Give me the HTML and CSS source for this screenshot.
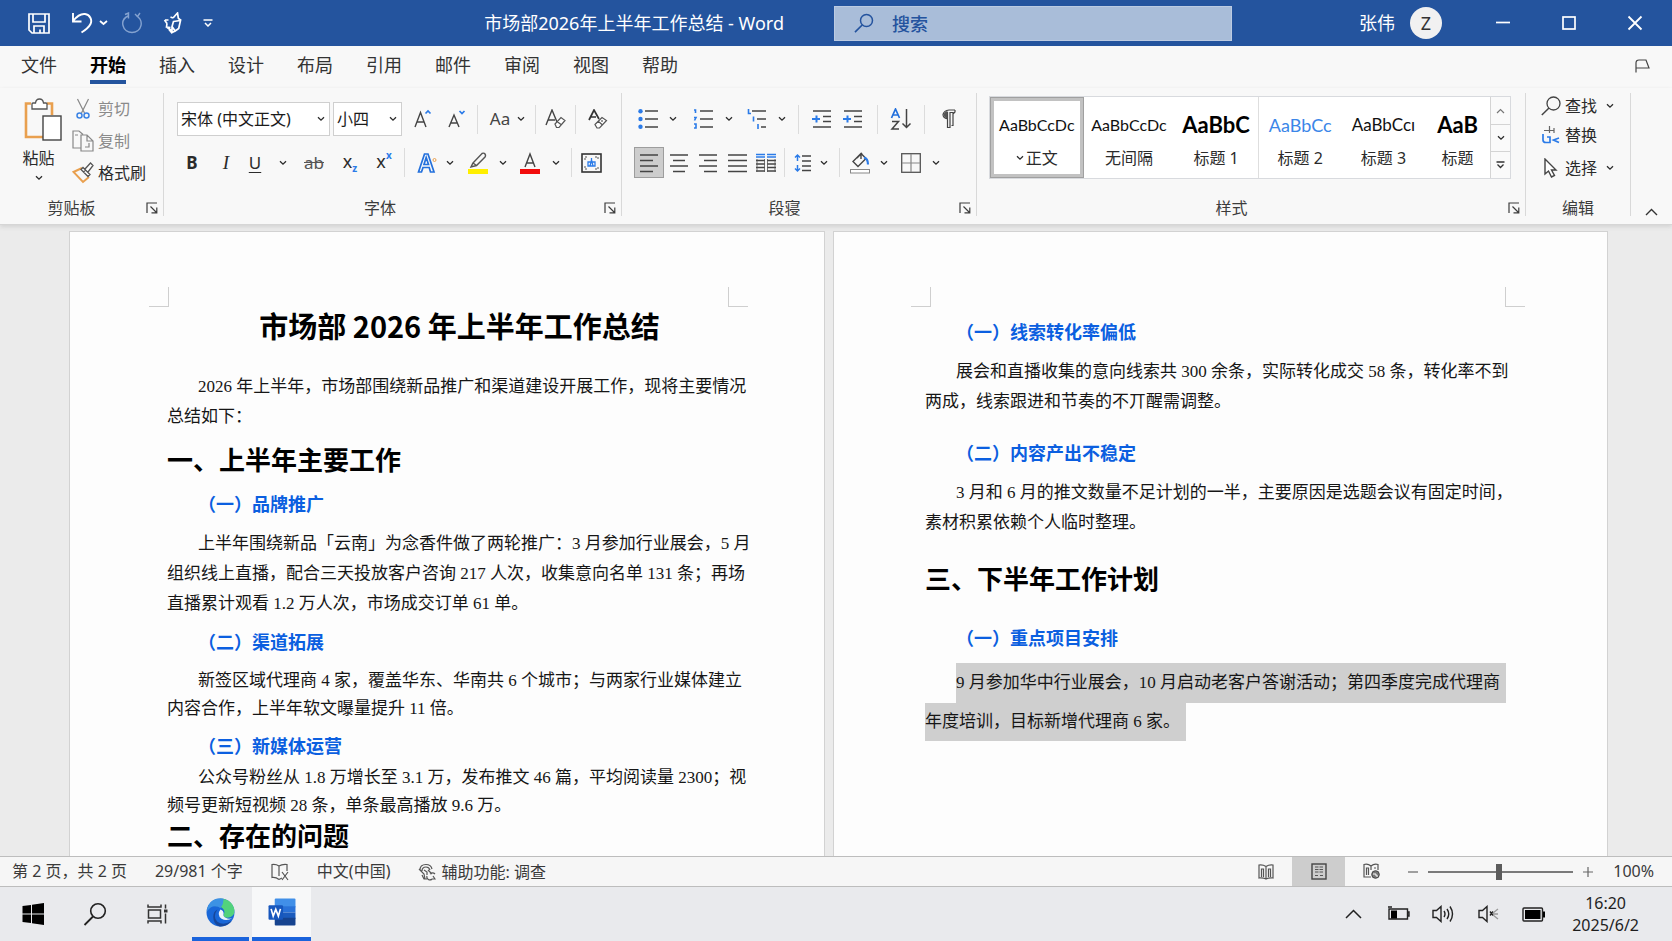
FILE: index.html
```html
<!DOCTYPE html>
<html lang="zh-CN">
<head>
<meta charset="utf-8">
<title>市场部2026年上半年工作总结 - Word</title>
<link rel="stylesheet" href="styles.css">
</head>
<body>
<svg class="defs" aria-hidden="true">
  <symbol id="chev" viewBox="0 0 8 6"><path d="M1 1.2 4 4.2 7 1.2" fill="none" stroke="currentColor" stroke-width="1.3"/></symbol>
  <symbol id="launch" viewBox="0 0 12 12"><path d="M1 11V1h10M4.5 4.5l6 6M10.8 5.5v5.3H5.5" fill="none" stroke="currentColor" stroke-width="1.2"/></symbol>
</svg>

<header class="titlebar">
  <div class="qat">
    <button class="ico" aria-label="保存"><svg width="24" height="24" viewBox="0 0 24 24"><path d="M2 3h20v19H5l-3-3zM6 3v8h12V3M7 22v-7h10v7M13 18.500v3" fill="none" stroke="#fff" stroke-width="1.7"/></svg></button>
    <button class="ico" aria-label="撤消"><svg width="22" height="24" viewBox="0 0 22 24"><path d="M2 2v8.500h8.500M2 10C6 5 10 2.500 14 3c5 .6 7.500 6 5.500 10-1.500 3-5 6-9 8.500" fill="none" stroke="#fff" stroke-width="1.9"/></svg></button>
    <button class="ico chevbtn" aria-label="撤消选项"><svg width="9" height="6" viewBox="0 0 9 6"><path d="M1 1l3.500 3L8 1" fill="none" stroke="#fff" stroke-width="1.8"/></svg></button>
    <button class="ico redo" aria-label="重复"><svg width="22" height="22" viewBox="0 0 22 22"><path d="M4 2.500 7.500 1v5.500M7 4C3 6 1 9.500 2 13.500 3 18 7 20.500 11 20.500s8-2.500 9-7c.8-4-1-7.500-4.500-9.500M14 2l5 5M19 1l-2.500 3.500" fill="none" stroke="#85a3d0" stroke-width="1.4"/></svg></button>
    <button class="ico" aria-label="触摸模式"><svg width="20" height="22" viewBox="0 0 20 22"><path d="M10 6 14.500 1l.8 5M10 6 7.500 5M2 8h3.500M1.500 8 4 11.500M4 11.500 3.500 15l4 .5M3.500 15l5 3.500M10.500 9.500 17.500 8.500l-1.800 8-3.500 2.500-3.200-4.500zM9 15v5.500l3.500-1.800M15 6l3 2.500M6 17.500l2.500 3" fill="none" stroke="#fff" stroke-width="1.7"/></svg></button>
    <button class="ico" aria-label="自定义快速访问工具栏"><svg width="10" height="8" viewBox="0 0 10 8"><path d="M.5 1h9M2 4l3 3 3-3" fill="none" stroke="#fff" stroke-width="1.5"/></svg></button>
  </div>
  <h1 class="wintitle">市场部2026年上半年工作总结 - Word</h1>
  <label class="search"><svg width="20" height="20" viewBox="0 0 20 20"><circle cx="12.500" cy="7.500" r="6" fill="none" stroke="#24539e" stroke-width="1.500"/><path d="M8.200 12 1 19.200" stroke="#24539e" stroke-width="1.700"/></svg><input type="text" placeholder="搜索" aria-label="搜索"></label>
  <div class="account">
    <span>张伟</span><span class="avatar">Z</span>
    <button class="win" aria-label="最小化"><svg width="16" height="16"><path d="M1 7.500h14" stroke="#fff" stroke-width="1.700"/></svg></button>
    <button class="win" aria-label="最大化"><svg width="16" height="16"><rect x="2" y="2" width="12" height="12" fill="none" stroke="#fff" stroke-width="1.700"/></svg></button>
    <button class="win" aria-label="关闭"><svg width="16" height="16"><path d="M1.500 1.500l13 13M14.500 1.500l-13 13" stroke="#fff" stroke-width="1.800"/></svg></button>
  </div>
</header>

<nav class="tabs">
  <a href="#file">文件</a><a href="#home" class="active">开始</a><a href="#insert">插入</a><a href="#design">设计</a><a href="#layout">布局</a><a href="#ref">引用</a><a href="#mail">邮件</a><a href="#review">审阅</a><a href="#view">视图</a><a href="#help">帮助</a>
  <button class="ico flag" aria-label="反馈"><svg width="15" height="14" viewBox="0 0 15 14"><path d="M1 13.500V4q0-3 3-3h7l3 8H1" fill="none" stroke="#444" stroke-width="1.200"/></svg></button>
</nav>

<section class="ribbon" aria-label="开始">
  <div class="group g-clip">
    <div class="body clip">
      <button class="paste"><svg width="47" height="43" viewBox="-9 0 47 43"><path d="M7 5.500H2V39h17M23 5.500h5V17" fill="none" stroke="#e9a04f" stroke-width="2.600"/><path d="M8 11V6q0-1 1-1h2.500q.5-4 4-4t4 4H22q1 0 1 1v5z" fill="#fff" stroke="#555" stroke-width="1.300"/><rect x="19" y="18" width="18" height="24" fill="#fff" stroke="#444" stroke-width="1.400"/></svg><span>粘贴</span><svg class="chev"><use href="#chev"/></svg></button>
      <div class="cliplist">
        <button class="row off"><svg width="22" height="22" viewBox="0 0 22 22"><path d="M5.500 1l7 14M16.500 1l-7 14" stroke="#888" stroke-width="1.200"/><circle cx="7.500" cy="17.500" r="2.500" fill="none" stroke="#3b83e4" stroke-width="1.500"/><circle cx="14.500" cy="17.500" r="2.500" fill="none" stroke="#3b83e4" stroke-width="1.500"/></svg>剪切</button>
        <button class="row off"><svg width="22" height="22" viewBox="0 0 22 22"><path d="M8.500 18H1V1h6l4 3.500M9 5h6l6 6v10H9zM15 5v6h6M3 5h3M17 13v4h-4" fill="none" stroke="#888" stroke-width="1.200"/></svg>复制</button>
        <button class="row"><svg width="22" height="22" viewBox="0 0 22 22"><path d="M10 6 1.500 10 11 20l6-5" fill="none" stroke="#e9a04f" stroke-width="2"/><path d="M9 7.500 11 5.500l7 7-2 2zM13 7l5.500-6L21 3.500 16 10M11.500 10l2-2" fill="#fff" stroke="#555" stroke-width="1.300"/></svg>格式刷</button>
      </div>
    </div>
    <div class="foot"><span>剪贴板</span><button class="ico" aria-label="剪贴板选项"><svg width="12" height="12"><use href="#launch"/></svg></button></div>
  </div>

  <div class="group g-font">
    <div class="body tools">
      <div class="line f1">
        <div class="pick"><select aria-label="字体"><option>宋体 (中文正文)</option></select><svg class="chev"><use href="#chev"/></svg></div>
        <div class="pick"><select aria-label="字号"><option>小四</option></select><svg class="chev"><use href="#chev"/></svg></div>
        <button aria-label="增大字号"><svg width="18" height="20" viewBox="0 0 18 20"><path d="M1 18 6.500 3.500 12 18M3 13h7" fill="none" stroke="#444" stroke-width="1.400"/><path d="M11.500 4.500 14 2l2.500 2.500" fill="none" stroke="#2b7be8" stroke-width="1.700"/></svg></button>
        <button aria-label="减小字号"><svg width="18" height="20" viewBox="0 0 18 20"><path d="M1 18 6 6 11 18M3 14h6" fill="none" stroke="#444" stroke-width="1.400"/><path d="M11.500 2 14 4.500 16.500 2" fill="none" stroke="#2b7be8" stroke-width="1.700"/></svg></button>
        <i class="sep"></i>
        <button class="aa">Aa</button><button aria-label="大小写选项"><svg class="chev"><use href="#chev"/></svg></button>
        <i class="sep"></i>
        <button aria-label="拼音指南"><svg width="21" height="20" viewBox="0 0 21 20"><path d="M1 16 7 1l5 12M3 11h7" fill="none" stroke="#444" stroke-width="1.400"/><path d="M10 15l6-6.500 4 3-6 7h-2.500zM12 12.500l4 3" fill="#fff" stroke="#555" stroke-width="1.200"/></svg></button>
        <i class="sep"></i>
        <button aria-label="清除格式"><svg width="21" height="20" viewBox="0 0 21 20"><path d="M2 11 7 1l5 9M4 8h5" fill="none" stroke="#333" stroke-width="1.700"/><path d="M8 15.500l7-7 4.500 3-7 7.500H10zM11 12l4.500 4M15 11v2" fill="#fff" stroke="#555" stroke-width="1.200"/></svg></button>
      </div>
      <div class="line f2">
        <button class="bold">B</button><button class="ital">I</button><button class="und">U</button><button aria-label="下划线选项"><svg class="chev"><use href="#chev"/></svg></button>
        <button class="strike">ab</button><button class="script">x<sub>z</sub></button><button class="script">x<sup>x</sup></button>
        <i class="sep"></i>
        <button aria-label="文本效果"><svg width="20" height="20" viewBox="0 0 20 20"><path d="M1.500 19 7.500 1h3.500l6 18h-3.500l-1.300-4.500H6L4.500 19zM7 11.500h4.500L9.200 4.500z" fill="none" stroke="#2370dc" stroke-width="1.700"/><circle cx="17.500" cy="7" r="1.500" fill="none" stroke="#e9a04f"/></svg></button><button aria-label="文本效果选项"><svg class="chev"><use href="#chev"/></svg></button>
        <button aria-label="突出显示"><svg width="22" height="22" viewBox="0 0 22 22"><rect x="1" y="17" width="20" height="5" fill="#ffef00"/><path d="M6 11 15 1.500q2-1 3 .5t0 3L9.500 13.500 4 15zM6 11l3.500 2.500" fill="none" stroke="#555" stroke-width="1.400"/></svg></button><button aria-label="突出显示选项"><svg class="chev"><use href="#chev"/></svg></button>
        <button aria-label="字体颜色"><svg width="22" height="22" viewBox="0 0 22 22"><rect x="1" y="17" width="20" height="5" fill="#f20d0d"/><path d="M6 15 11 2l5 13M8 11h6" fill="none" stroke="#444" stroke-width="1.400"/></svg></button><button aria-label="字体颜色选项"><svg class="chev"><use href="#chev"/></svg></button>
        <i class="sep"></i>
        <button aria-label="字符底纹"><svg width="21" height="20" viewBox="0 0 21 20"><rect x="1" y="1" width="19" height="18" fill="none" stroke="#333" stroke-width="1.600"/><path d="M4 7V4h3M14 4h3v3M4 13v3h3M14 16h3v-3" fill="none" stroke="#555" stroke-dasharray="2 1"/><path d="M10.500 5v2M7 13V9h7v4zM9 13l1.500-6 1.500 6" fill="none" stroke="#2b7be8" stroke-width="1.300"/></svg></button>
      </div>
    </div>
    <div class="foot"><span>字体</span><button class="ico" aria-label="字体选项"><svg width="12" height="12"><use href="#launch"/></svg></button></div>
  </div>

  <div class="group g-para">
    <div class="body tools">
      <div class="line p1">
        <button aria-label="项目符号"><svg width="20" height="20" viewBox="0 0 20 20"><path d="M7 2h13M7 10h13M7 18h13" stroke="#444" stroke-width="1.400"/><g fill="#2b7be8"><circle cx="2.500" cy="2.300" r="2.200"/><circle cx="2.500" cy="10" r="2.200"/><circle cx="2.500" cy="17.700" r="2.200"/></g></svg></button><button aria-label="项目符号选项"><svg class="chev"><use href="#chev"/></svg></button>
        <button aria-label="编号"><svg width="20" height="20" viewBox="0 0 20 20"><path d="M7 2h13M7 10h13M7 18h13" stroke="#444" stroke-width="1.400"/><path d="M1 1h1.500v3M1 8.500h2L1.500 11.500M1 15h2v4H1" fill="none" stroke="#2b7be8" stroke-width="1.600"/></svg></button><button aria-label="编号选项"><svg class="chev"><use href="#chev"/></svg></button>
        <button aria-label="多级列表"><svg width="20" height="20" viewBox="0 0 20 20"><path d="M5 2h14M10 10h9M14 18h5" stroke="#444" stroke-width="1.400"/><path d="M1.500 0v4.500H4M6.500 7.500v5M11 15v5" fill="none" stroke="#2b7be8" stroke-width="1.600"/></svg></button><button aria-label="多级列表选项"><svg class="chev"><use href="#chev"/></svg></button>
        <i class="sep"></i>
        <button aria-label="减少缩进量"><svg width="20" height="20" viewBox="0 0 20 20"><path d="M1 2h18M11 7.500h8M11 12.500h8M1 18h18" stroke="#444" stroke-width="1.400"/><path d="M0 10h8M4.500 6.500v7" stroke="#2b7be8" stroke-width="2"/></svg></button>
        <button aria-label="增加缩进量"><svg width="20" height="20" viewBox="0 0 20 20"><path d="M1 2h18M11 7.500h8M11 12.500h8M1 18h18" stroke="#444" stroke-width="1.400"/><path d="M0 10h8M4.500 6.500v7" stroke="#2b7be8" stroke-width="2"/></svg></button>
        <i class="sep"></i>
        <button aria-label="排序"><svg width="22" height="22" viewBox="0 0 22 22"><path d="M1.500 10 5.500 1l4 9M3 7h5" fill="none" stroke="#2370dc" stroke-width="1.700"/><path d="M2 13.500h6.500L2 21h7M16.500 1v18M12.500 15.500l4 4 4-4" fill="none" stroke="#444" stroke-width="1.500"/></svg></button>
        <i class="sep"></i>
        <button aria-label="显示编辑标记"><svg width="14" height="20" viewBox="0 0 14 20"><path d="M13 1H7Q2 1.500 1 5.500 1 9 5.500 10v8.500h2.500V3.500h3V16.500H9.500M5.500 3v7M13 1v2l-2 2" fill="none" stroke="#444" stroke-width="1.200"/><path d="M1.500 5.500Q3 2 5.500 2v7.500Q2 9 1.500 5.500" fill="#555"/></svg></button>
      </div>
      <div class="line p2">
        <button class="pressed" aria-label="左对齐"><svg width="20" height="20" viewBox="0 0 20 20"><path d="M1 2h18M1 7.500h13M1 13h18M1 18.500h13" stroke="#444" stroke-width="1.500"/></svg></button>
        <button aria-label="居中"><svg width="18" height="20" viewBox="0 0 18 20"><path d="M0 2h18M3 7.500h12M0 13h18M3 18.500h12" stroke="#444" stroke-width="1.500"/></svg></button>
        <button aria-label="右对齐"><svg width="18" height="20" viewBox="0 0 18 20"><path d="M0 2h18M5 7.500h13M0 13h18M5 18.500h13" stroke="#444" stroke-width="1.500"/></svg></button>
        <button aria-label="两端对齐"><svg width="19" height="20" viewBox="0 0 19 20"><path d="M0 2h19M0 7.500h19M0 13h19M0 18.500h19" stroke="#444" stroke-width="1.500"/></svg></button>
        <button aria-label="分散对齐"><svg width="20" height="20" viewBox="0 0 20 20"><path d="M0 1.500h9M11 1.500h9M0 4h9M11 4h9" stroke="#2b7be8" stroke-width="1.400"/><path d="M0 7.500h9M11 7.500h9M0 11h9M11 11h9M0 14.500h9M11 14.500h9M0 18h9M11 18h9" stroke="#444" stroke-width="1.500"/><path d="M1 6v13M19 6v13M8.500 6v13M11.500 6v13" stroke="#555" stroke-width=".8"/></svg></button>
        <i class="sep"></i>
        <button aria-label="行距"><svg width="17" height="20" viewBox="0 0 17 20"><path d="M8 3h9M8 8h9M8 13h9M8 17.500h9" stroke="#444" stroke-width="1.500"/><path d="M3.500 8V2M1 4.500 3.500 2 6 4.500M3.500 12v6M1 15.500 3.500 18 6 15.500" fill="none" stroke="#2b7be8" stroke-width="1.500"/></svg></button><button aria-label="行距选项"><svg class="chev"><use href="#chev"/></svg></button>
        <i class="sep"></i>
        <button aria-label="底纹"><svg width="22" height="22" viewBox="0 0 22 22"><rect x="1.500" y="17.500" width="19" height="3.500" fill="#fff" stroke="#888"/><path d="M4 9.500 12 1.500l5 5-8 8zM12 1.500v5.500M8 6l5-5" fill="none" stroke="#444" stroke-width="1.400"/><path d="M15 5.500q4 1 4 7" fill="none" stroke="#2b7be8" stroke-width="2.200"/></svg></button><button aria-label="底纹选项"><svg class="chev"><use href="#chev"/></svg></button>
        <button aria-label="边框"><svg width="20" height="20" viewBox="0 0 20 20"><rect x=".7" y=".7" width="18.600" height="18.600" fill="none" stroke="#555" stroke-width="1.300"/><path d="M10 1v18M1 10h18" stroke="#888" stroke-width="1.200"/></svg></button><button aria-label="边框选项"><svg class="chev"><use href="#chev"/></svg></button>
      </div>
    </div>
    <div class="foot"><span>段寝</span><button class="ico" aria-label="段落选项"><svg width="12" height="12"><use href="#launch"/></svg></button></div>
  </div>

  <div class="group g-style">
    <div class="gallery">
      <button class="style on"><span class="sample">AaBbCcDc</span><span class="name"><svg class="chev"><use href="#chev"/></svg>正文</span></button>
      <button class="style"><span class="sample">AaBbCcDc</span><span class="name">无间隔</span></button>
      <button class="style"><span class="sample big">AaBbC</span><span class="name">标题 1</span></button>
      <button class="style div"><span class="sample blue">AaBbCc</span><span class="name">标题 2</span></button>
      <button class="style"><span class="sample narrow">AaBbCcı</span><span class="name">标题 3</span></button>
      <button class="style"><span class="sample big">AaB</span><span class="name">标题</span></button>
      <div class="scroll">
        <button aria-label="上一行"><svg width="9" height="6" viewBox="0 0 9 6"><path d="M1 5l3.500-3.500L8 5" fill="none" stroke="#777" stroke-width="1.200"/></svg></button>
        <button aria-label="下一行"><svg class="chev"><use href="#chev"/></svg></button>
        <button aria-label="更多样式"><svg width="9" height="8" viewBox="0 0 9 8"><path d="M.5 1h8M1.500 3.500l3 3 3-3" fill="none" stroke="#333" stroke-width="1.300"/></svg></button>
      </div>
    </div>
    <div class="foot"><span>样式</span><button class="ico" aria-label="样式选项"><svg width="12" height="12"><use href="#launch"/></svg></button></div>
  </div>

  <div class="group g-edit">
    <div class="body editlist">
      <button class="row"><svg width="20" height="20" viewBox="0 0 20 20"><circle cx="12.500" cy="7.500" r="6.500" fill="none" stroke="#444" stroke-width="1.300"/><path d="M8 12 .8 19" stroke="#444" stroke-width="1.500"/></svg>查找<svg class="chev"><use href="#chev"/></svg></button>
      <button class="row"><svg width="20" height="20" viewBox="0 0 20 20"><path d="M3 5.500h10M8.500 1v7M13 3v5" fill="none" stroke="#666" stroke-width="1.200"/><path d="M2 9v6q0 2.500 3 2.500h4V12H6M18 13l-5.500 2 5.500 2.500" fill="none" stroke="#2b7be8" stroke-width="1.700"/></svg>替换</button>
      <button class="row"><svg width="20" height="20" viewBox="0 0 20 20"><path d="M4 1v15l3.500-3 3 6 3-1.500-3-5.500H15z" fill="#fff" stroke="#444" stroke-width="1.400"/></svg>选择<svg class="chev"><use href="#chev"/></svg></button>
    </div>
    <div class="foot"><span>编辑</span></div>
  </div>
  <div class="collapse"><button class="ico" aria-label="折叠功能区"><svg width="13" height="8" viewBox="0 0 13 8"><path d="M1 7l5.500-5.500L12 7" fill="none" stroke="#333" stroke-width="1.400"/></svg></button></div>
</section>

<main class="canvas">
  <article class="page pg1">
    <div class="corners"><i></i><i></i></div>
    <h1>市场部 2026 年上半年工作总结</h1>
    <p class="loose">2026 年上半年，市场部围绕新品推广和渠道建设开展工作，现将主要情况<br>总结如下：</p>
    <h2>一、上半年主要工作</h2>
    <h3>（一）品牌推广</h3>
    <p class="loose">上半年围绕新品「云南」为念香件做了两轮推广：3 月参加行业展会，5 月<br>组织线上直播，配合三天投放客户咨询 217 人次，收集意向名单 131 条；再场<br>直播累计观看 1.2 万人次，市场成交订单 61 单。</p>
    <h3>（二）渠道拓展</h3>
    <p>新签区域代理商 4 家，覆盖华东、华南共 6 个城市；与两家行业媒体建立<br>内容合作，上半年软文曝量提升 11 倍。</p>
    <h3>（三）新媒体运营</h3>
    <p class="close">公众号粉丝从 1.8 万增长至 3.1 万，发布推文 46 篇，平均阅读量 2300；视<br>频号更新短视频 28 条，单条最高播放 9.6 万。</p>
    <h2 class="close">二、存在的问题</h2>
  </article>
  <article class="page pg2">
    <div class="corners"><i></i><i></i></div>
    <h3>（一）线索转化率偏低</h3>
    <p class="loose">展会和直播收集的意向线索共 300 余条，实际转化成交 58 条，转化率不到<br>两成，线索跟进和节奏的不丌醒需调整。</p>
    <h3 class="apart">（二）内容产出不稳定</h3>
    <p class="loose">3 月和 6 月的推文数量不足计划的一半，主要原因是选题会议有固定时间，<br>素材积累依赖个人临时整理。</p>
    <h2>三、下半年工作计划</h2>
    <h3 class="apart">（一）重点项目安排</h3>
    <p class="picked"><mark>9 月参加华中行业展会，10 月启动老客户答谢活动；第四季度完成代理商</mark><mark>年度培训，目标新增代理商 6 家。</mark></p>
  </article>
</main>

<footer class="status">
  <span>第 2 页，共 2 页</span><span>29/981 个字</span>
  <button class="ico" aria-label="校对"><svg width="18" height="18" viewBox="0 0 18 18"><path d="M8 3Q5 1 1 1.500v13Q5 14 8 16.500M8 3v10M8 3q3-2 8-1.500V8M8 16.500l3-1.500M11 9l6 8M17 9l-6 8" fill="none" stroke="#555" stroke-width="1.200"/></svg></button>
  <span>中文(中国)</span>
  <button class="acc"><svg width="18" height="18" viewBox="0 0 18 18"><path d="M2 7Q2 1.500 8 1.500q5 0 6 4.500M4 8q0-4 4-4 3 0 4 3M1 6l5 5 1 5M6 7l3 2v3M4 12l2 4h3M10 7l4 4M9 13a3 3 0 0 0 5 3M17 11a3.500 3.500 0 0 0-5 0M15 13l2 3h-3" fill="none" stroke="#555" stroke-width="1.200"/></svg>辅助功能: 调查</button>
  <div class="views">
    <button aria-label="阅读视图"><svg width="16" height="16" viewBox="0 0 16 16"><path d="M8 2.500Q5 .5 1 1v13q4-.5 7 1 3-1.500 7-1V1q-4-.5-7 1.500V15M3.500 13V5h2v8M10.500 13V5h2v8" fill="none" stroke="#555" stroke-width="1.200"/></svg></button>
    <button class="pressed" aria-label="页面视图"><svg width="16" height="17" viewBox="0 0 16 17"><rect x="1" y="1" width="14" height="15" fill="none" stroke="#444" stroke-width="1.400"/><path d="M4 4h3.500M8.500 4H12M4 6.500h3.500M8.500 6.500H12M4 9h3.500M8.500 9H12M4 12.500h3M9 12.500h3" stroke="#555" stroke-width="1.200"/></svg></button>
    <button aria-label="Web 版式"><svg width="17" height="17" viewBox="0 0 17 17"><path d="M8 14H1V1.500Q5 .5 8 3q3-2.500 7-1.500V7M8 3v4M3.500 12V5h2v7M11 5h2" fill="none" stroke="#555" stroke-width="1.200"/><circle cx="12.500" cy="11.500" r="3.800" fill="#777" stroke="#444"/><path d="M10 11h3v2h2" fill="none" stroke="#fff"/></svg></button>
  </div>
  <button class="ico" aria-label="缩小"><svg width="12" height="12"><path d="M1 6h10" stroke="#666" stroke-width="1.200"/></svg></button>
  <input class="zoom" type="range" min="0" max="100" value="49" aria-label="显示比例">
  <button class="ico" aria-label="放大"><svg width="12" height="12"><path d="M1 6h10M6 1v10" stroke="#666" stroke-width="1.200"/></svg></button>
  <span class="pct">100%</span>
</footer>

<div class="taskbar">
  <button class="app" aria-label="开始菜单"><svg width="22" height="22" viewBox="0 0 22 22"><path d="M.5 3 9 2v8.500H.5zM10 1.800 22 0v10.500H10zM.5 11.500H9V20L.5 19zM10 11.500h12V22l-12-1.800z" fill="#000"/></svg></button>
  <button class="app" aria-label="任务栏搜索"><svg width="24" height="24" viewBox="0 0 24 24"><circle cx="15" cy="9" r="7.300" fill="none" stroke="#222" stroke-width="1.600"/><path d="M10 14.500 1.500 23" stroke="#222" stroke-width="1.800"/></svg></button>
  <button class="app" aria-label="任务视图"><svg width="21" height="20" viewBox="0 0 21 20"><path d="M1 .5V3h13V.5M1 19.500V17h13v2.500M1.500 6h12v8h-12zM18.500.5v4M18.500 9.500v10" fill="none" stroke="#333" stroke-width="1.500"/><path d="M17 5.500h3.500v3H17z" fill="#333"/></svg></button>
  <button class="app run" aria-label="Edge"><svg width="29" height="29" viewBox="0 0 28 28"><circle cx="14" cy="14" r="13.500" fill="#1967d8"/><path d="M14 .5Q24 1 27 9.500 29 18 21 19q-5 0-4-3 2-3-1-6-3-3-7-2Q12 3 14 .5z" fill="#52d27c"/><path d="M17 .8Q7-1 3 6 1 9 1 13q3-5 8-5 3 0 5 2 3-4 3-9z" fill="#3c92e4"/><path d="M11 11q-5 7 0 12 6 4 14-1-5 6-12 5.400Q7 25 7 18q0-5 4-7z" fill="#17479b"/><path d="M14 11q-4 5 1 9 5 3 11-1-4 2-7 0-3-1-2-4 0-3-3-4z" fill="#eef4fb"/></svg></button>
  <button class="app run cur" aria-label="Word"><svg width="28" height="28" viewBox="0 0 26 27"><path d="M6 1.500Q6 .5 7 .5h18q1 0 1 1V9H6z" fill="#418fe8"/><path d="M6 8h20v6H6z" fill="#2a72d8"/><path d="M6 14h20v6H6z" fill="#1b5bbd"/><path d="M6 19h20v6.500q0 1-1 1H7q-1 0-1-1z" fill="#16438f"/><rect y="7" width="14" height="14" rx="1" fill="#1757bd"/><path d="M2.500 10.500 4.500 17.500 7 11l2.500 6.500 2-7" fill="none" stroke="#fff" stroke-width="1.600"/></svg></button>
  <div class="tray">
    <button aria-label="隐藏的图标"><svg width="17" height="10" viewBox="0 0 17 10"><path d="M1 9l7.500-7.500L16 9" fill="none" stroke="#222" stroke-width="1.500"/></svg></button>
    <button aria-label="电源"><svg width="23" height="16" viewBox="0 0 23 16"><path d="M2 3h18.500v10H2zM20.500 6H22v4h-1.500M1 1h4" fill="none" stroke="#222" stroke-width="1.400"/><path d="M4 4.500h6v8H4z"/></svg></button>
    <button aria-label="音量"><svg width="23" height="18" viewBox="0 0 23 18"><path d="M1 5.500h3.500L9 1.500v15l-4.500-4H1zM12 6q2 3 0 6M15 4q3.500 5 0 10M18 1.500q5 7.500 0 15" fill="none" stroke="#222" stroke-width="1.400"/></svg></button>
    <button aria-label="静音"><svg width="21" height="18" viewBox="0 0 21 18"><path d="M1 5.500h3.500L9 1.500v15l-4.500-4H1z" fill="none" stroke="#222" stroke-width="1.400"/><path d="M12 6.500l3 4M15 6.500l-3 4" stroke="#222" stroke-width="1.400"/><path d="M15 8l5-4M15 9h5M15 10l5 4" stroke="#999" stroke-width="1.300"/></svg></button>
    <button aria-label="电池"><svg width="23" height="15" viewBox="0 0 23 15"><rect x="1" y="1" width="19.500" height="13" rx="1" fill="none" stroke="#222" stroke-width="1.400"/><path d="M3 3h15.500v9H3zM21 4.500h2v6h-2z"/></svg></button>
  </div>
  <time class="clock" datetime="2025-06-02T16:20">16:20<br>2025/6/2</time>
</div>
</body>
</html>
```
FILE: styles.css
```css
* { box-sizing: border-box; }

body {
  margin: 0;
  height: 100vh;
  display: flex;
  flex-direction: column;
  overflow: hidden;
  font-family: "Noto Sans", "Noto Sans CJK SC", sans-serif;
  font-size: 16px;
  line-height: 20px;
  color: #2b2b2b;
  background: #ebebeb;
}

button, input, select { font: inherit; color: inherit; }
button {
  display: flex;
  align-items: center;
  justify-content: center;
  padding: 0;
  border: 0;
  background: none;
}
h1, h2, h3, p { margin: 0; }
svg { display: block; flex: none; }
.defs { position: absolute; width: 0; height: 0; }
.chev { width: 8px; height: 6px; }

/* Title bar */
.titlebar {
  flex: none;
  display: flex;
  align-items: center;
  height: 46px;
  padding-left: 27px;
  background: #24549e;
  color: #fff;
  font-size: 18px;
}
.qat { display: flex; align-items: center; gap: 20px; }
.qat .chevbtn { margin-left: -14px; margin-right: -7px; }
.wintitle {
  flex: 1;
  margin-right: 50px;
  text-align: right;
  font-size: 18px;
  font-weight: 400;
}
.search {
  flex: 0 0 398px;
  display: flex;
  align-items: center;
  gap: 18px;
  height: 35px;
  padding-left: 19px;
  background: #a9bdd9;
  border: 1px solid #bccbe2;
}
.search input {
  flex: 1;
  min-width: 0;
  border: 0;
  padding: 0;
  background: none;
  outline: 0;
  font-family: "Noto Sans CJK SC", sans-serif;
}
.search input::placeholder { color: #24539e; opacity: 1; font-weight: 500; }
.account {
  flex: 0 0 440px;
  display: flex;
  align-items: center;
  justify-content: flex-end;
}
.avatar {
  width: 32px;
  height: 32px;
  margin: 0 28px 0 15px;
  border-radius: 50%;
  background: #f1f1f1;
  color: #333;
  line-height: 32px;
  text-align: center;
}
.win { width: 66px; height: 46px; }
.win:last-child { margin-right: 4px; }

/* Tabs */
.tabs {
  flex: none;
  display: flex;
  align-items: center;
  gap: 33px;
  height: 42px;
  padding: 0 22px 2px 21px;
  background: #f8f8f8;
  font-size: 18px;
}
.tabs a {
  padding: 6px 0 4px;
  border-bottom: 4px solid transparent;
  line-height: 22px;
  color: #333;
  text-decoration: none;
}
.tabs .active { color: #000; font-weight: 700; border-color: #24549e; }
.flag { margin-left: auto; }

/* Ribbon */
.ribbon {
  flex: none;
  display: flex;
  height: 137px;
  padding: 5px 0 8px;
  background: #f8f8f8;
  border-bottom: 1px solid #d6d6d6;
  box-shadow: 0 2px 4px #d4d4d4;
  position: relative;
}
.group {
  display: flex;
  flex-direction: column;
  justify-content: space-between;
  border-right: 1px solid #d9d9d9;
}
.g-clip { flex: 0 0 164px; }
.g-font { flex: 0 0 458px; }
.g-para { flex: 0 0 355px; }
.g-style { flex: 1; min-width: 0; padding-left: 12px; }
.g-edit { flex: 0 0 105px; }
.foot {
  display: flex;
  align-items: center;
  height: 20px;
  margin-bottom: -2px;
  padding-right: 5px;
  color: #3c3c3c;
}
.foot span { flex: 1; text-align: center; }
.g-clip .foot span { padding-right: 3px; }
.g-font .foot span { padding-right: 8px; }
.g-para .foot span { padding-right: 12px; }
.g-style .foot span { padding-right: 34px; }
.g-edit .foot { padding-right: 0; }

.clip { display: flex; padding-left: 15px; }
.paste { flex-direction: column; justify-content: flex-start; gap: 7px; padding-top: 5px; width: 47px; }
.cliplist { display: flex; flex-direction: column; padding-left: 10px; }
.row { height: 32px; gap: 4px; justify-content: flex-start; }
.off { color: #8a8a8a; }

.tools { display: flex; flex-direction: column; gap: 11px; padding-top: 9px; }
.g-font .tools { padding-left: 13px; }
.g-para .tools { padding-left: 12px; }
.line { display: grid; height: 34px; align-items: center; }
.line + .line { height: 31px; }
.line > button { height: 31px; }
.f1 { grid-template-columns: 156px 70px 40px 28px 12px 34px 8px 20px 20px 20px 24px; }
.f2 { grid-template-columns: 30px 38px 20px 36px 26px 46px 22px 18px 28px 18px 38px 12px 42px 10px 20px 21px; }
.p1 { grid-template-columns: 28px 22px 38px 14px 42px 8px 24px 24px 38px 10px 38px 8px 42px; }
.p2 { grid-template-columns: 30px 29px 30px 28px 29px 8px 29px 14px 16px 26px 22px 32px 18px; }
.sep { justify-self: center; width: 1px; height: 29px; background: #dcdcdc; }
.pick { display: grid; align-items: center; height: 34px; margin-right: 3px; }
.pick > * { grid-area: 1 / 1; }
.pick select {
  height: 34px;
  width: 100%;
  padding: 0 3px;
  appearance: none;
  border: 1px solid #cfcfcf;
  border-radius: 0;
  background: #fff;
  color: #1b1b1b;
}
.pick .chev { justify-self: end; margin-right: 5px; pointer-events: none; }
.pick:nth-child(2) { margin-right: 1px; }
.aa { font-size: 17px; color: #444; }
.bold { font-weight: 700; font-size: 17px; }
.ital { font-family: "Liberation Serif", serif; font-style: italic; font-size: 19px; }
.und { text-decoration: underline; text-underline-offset: 3px; font-size: 17px; }
.strike { text-decoration: line-through; font-size: 17px; color: #555; }
.script { font-size: 18px; align-items: baseline; line-height: 28px; }
.script sub, .script sup { font-size: 10px; line-height: 10px; color: #2b7be8; font-weight: 700; }
.script sub { position: relative; top: 4px; }
.script sup { position: relative; top: -9px; }
.pressed { background: #cdcdcd; }
.p2 .pressed { border: 1px solid #9d9d9d; }

.gallery {
  display: grid;
  grid-template-columns: 94fr 91fr 84fr 84fr 84fr 65fr 20px;
  height: 83px;
  margin: 3px 14px 0 0;
  background: #fff;
  border: 1px solid #d8dade;
}
.style { flex-direction: column; gap: 11px; min-width: 0; padding-top: 5px; }
.style.on { border: 4px solid #c2c2c2; outline: 1px solid #a0a0a0; outline-offset: -1px; }
.div { border-left: 1px solid #dedede; }
.sample {
  height: 24px;
  font-family: Lato, sans-serif;
  font-size: 16px;
  line-height: 24px;
  white-space: nowrap;
  color: #111;
}
.sample.big { font-size: 22px; font-weight: 700; color: #000; }
.sample.blue { font-size: 18px; color: #3b86e8; }
.sample.narrow { font-size: 17px; }
.name { display: flex; align-items: center; gap: 2px; line-height: 20px; white-space: nowrap; }
.scroll { display: grid; grid-template-rows: 1fr 1fr 1fr; border-left: 1px solid #d4d4d4; background: #fafafa; }
.scroll button + button { border-top: 1px solid #d4d4d4; }

.editlist { padding: 0 0 6px 15px; }
.editlist .row { height: 33px; }
.editlist .row:first-child { height: 25px; }
.editlist .chev { margin-left: 5px; }
.collapse { flex: 0 0 41px; display: flex; align-items: flex-end; justify-content: center; }

/* Document */
.canvas {
  flex: 1;
  min-height: 0;
  display: grid;
  grid-template-columns: 756fr 775fr;
  gap: 8px;
  padding: 6px 64px 0 69px;
  overflow: hidden;
}
.page {
  min-width: 0;
  overflow: hidden;
  background: #fdfdfd;
  border: 1px solid #d2d2d2;
  border-bottom: 0;
  font-family: "Liberation Serif", "Noto Sans CJK SC", serif;
  font-size: 17px;
  color: #161616;
  white-space: nowrap;
}
.pg1 { padding-left: 97px; }
.pg2 { padding-left: 91px; }
.corners { display: flex; justify-content: space-between; height: 20px; margin: 55px 76px 0 -18px; }
.pg2 .corners { margin: 55px 82px 0 -14px; }
.corners i { width: 20px; border: solid #cfcfcf; border-width: 0 1px 1px 0; }
.corners i + i { border-width: 0 0 1px 1px; }
.page h1 {
  padding-right: 72px;
  margin: -2px 0 27px;
  font: 700 29px/40px "Noto Sans CJK SC", sans-serif;
  text-align: center;
  color: #000;
}
.page h2 {
  margin: 9px 0 11px;
  font: 700 26px/36px "Noto Sans CJK SC", sans-serif;
  color: #000;
}
.page h3 {
  margin: 7px 0 11px;
  padding-left: 31px;
  font: 700 18px/30px "Noto Sans CJK SC", serif;
  color: #0b5fe0;
}
.page p { line-height: 28px; text-indent: 31px; }
.page p.loose { line-height: 30px; }
.page p.close { margin-top: -7px; }
.page h2.close { margin-top: -3px; }
.pg2 .corners + h3 { margin-top: 9px; }
.page h3.apart { margin-top: 20px; }
.pg2 h2 { margin: 22px 0 26px; }
.page .picked { text-indent: 0; line-height: 38px; }
.page mark { display: block; width: fit-content; background: #cfcfcf; color: inherit; }
.page mark:first-child { margin-left: 31px; padding-right: 6px; line-height: 40px; }
.page mark + mark { padding-right: 6px; }

/* Status bar */
.status {
  flex: none;
  display: flex;
  align-items: center;
  gap: 28px;
  height: 31px;
  padding: 0 18px 0 12px;
  background: #f6f6f6;
  border-top: 1px solid #bdbdbd;
  border-bottom: 1px solid #bdbdbd;
  color: #3a3a3a;
  line-height: 28px;
}
.status > span { height: 30px; }
.acc { gap: 5px; }
.views { display: flex; align-self: stretch; margin-left: auto; }
.views button { width: 53px; }
.views + .ico, .zoom + .ico { margin: 0 -19px; }
.zoom {
  width: 145px;
  height: 17px;
  margin: 0;
  appearance: none;
  background: linear-gradient(#7a7a7a, #7a7a7a) center / 100% 2px no-repeat;
}
.zoom::-webkit-slider-thumb { appearance: none; width: 6px; height: 16px; background: #5c5c5c; }
.pct { margin-left: 10px; }

/* Taskbar */
.taskbar {
  flex: none;
  display: flex;
  height: 54px;
  padding-left: 11px;
  background: #e9eaed;
}
.app { width: 44px; margin-right: 18px; }
.app:nth-child(3) { margin-right: 13px; }
.app.run { width: 57px; margin-right: 3px; border-bottom: 4px solid #1a63dc; }
.app.cur { width: 59px; background: #f7f8f9; }
.tray { display: flex; margin-left: auto; }
.tray button { width: 45px; }
.clock { padding: 5px 33px 0 16px; line-height: 22px; text-align: center; color: #1e1e1e; }
```
